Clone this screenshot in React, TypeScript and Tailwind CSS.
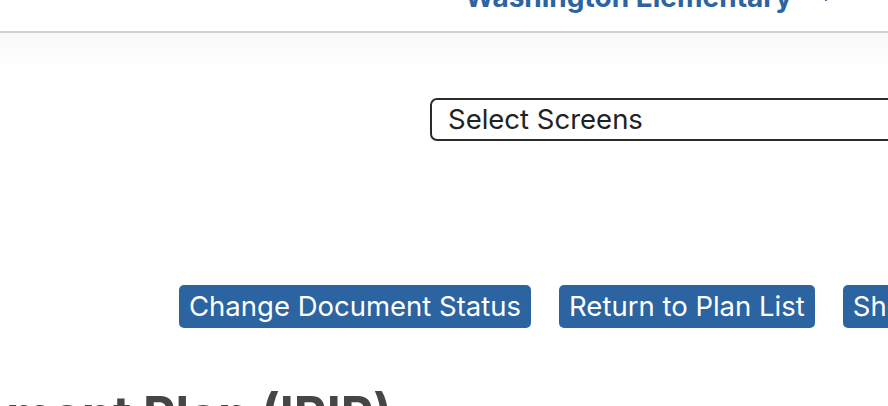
import React from 'react';
import { ChevronDown } from 'lucide-react';

const buttons = ['Change Document Status', 'Return to Plan List', 'Show Plan History'];

const App: React.FC = () => {
  return (
    <div className="w-[888px] h-[406px] overflow-hidden bg-white font-['Inter',sans-serif]">
      {/* top nav, scrolled so only the bottom shows */}
      <header className="h-[31px] overflow-hidden border-b-2 border-[#d0d0d0] box-content">
        <div className="flex items-center justify-end pr-[54px] -mt-[19px]">
          <span className="text-[28px] font-bold leading-[32px] text-[#2b64a0] whitespace-nowrap">
            Washington Elementary
          </span>
          <ChevronDown size={16} strokeWidth={3} className="ml-[26px] translate-y-[1px] text-[#2b64a0]" />
        </div>
      </header>

      <main className="bg-gradient-to-b from-[#f8f8f8] to-white to-[40px]">
        <div className="pt-[65px] pl-[430px]">
          <div className="w-[520px] h-[43px] flex items-center pl-[16px] border-2 border-[#2a2a2a] rounded-[7px] bg-white">
            <span className="text-[27.5px] text-[#222] leading-none">Select Screens</span>
          </div>
        </div>

        <div className="flex gap-[28px] pl-[179px] pt-[144px] whitespace-nowrap">
          {buttons.map(label => (
            <button
              key={label}
              className="h-[43px] px-[10px] rounded-[5px] bg-[#2b64a0] text-white text-[27.5px] leading-none shrink-0"
            >
              {label}
            </button>
          ))}
        </div>

        <div className="w-[392px] flex justify-end overflow-hidden pt-[61px]">
          <h1 className="text-[50px] font-bold leading-none text-[#464646] whitespace-nowrap">
            Individual Reading Improvement Plan (IRIP)
          </h1>
        </div>
      </main>
    </div>
  );
};

export default App;
